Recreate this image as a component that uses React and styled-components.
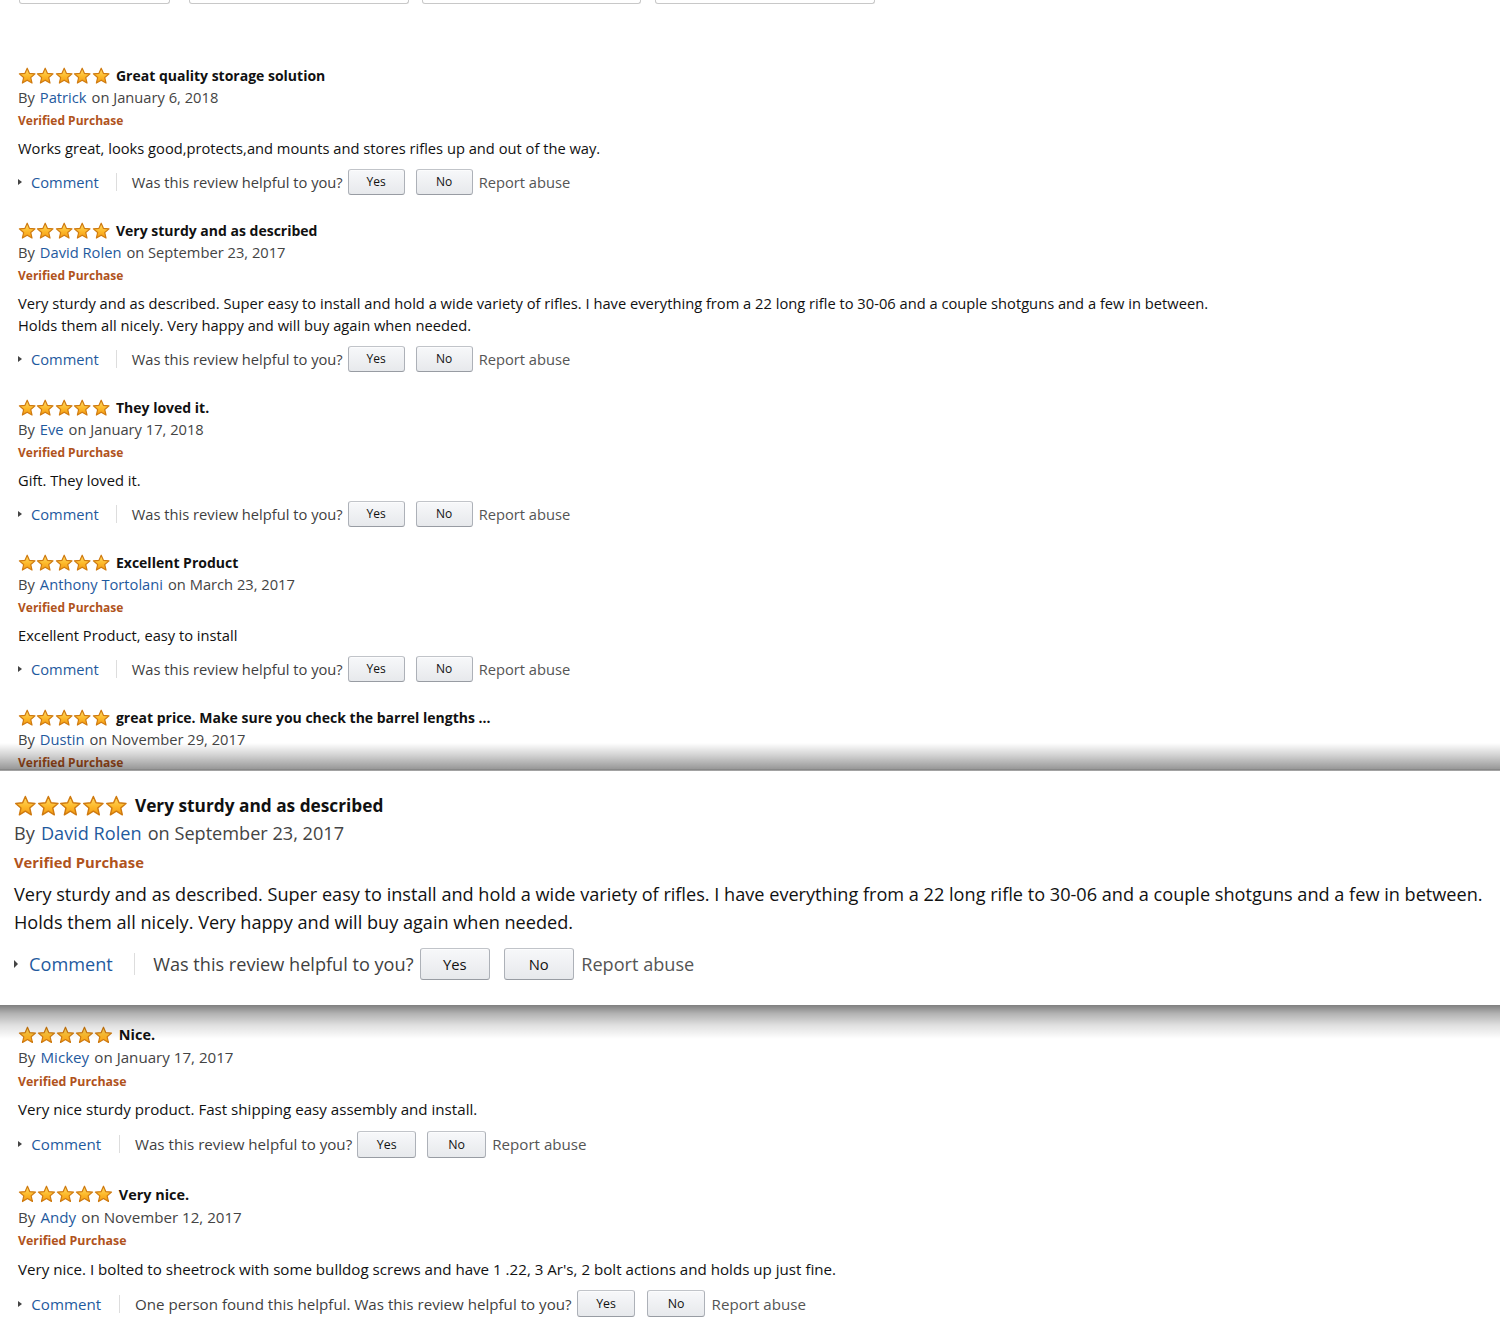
import React from "react";
import styled, { createGlobalStyle } from "styled-components";

// sizes scale with the review block ($s), the spotlight panel is drawn larger
const u = n => p => `${+(n * p.$s).toFixed(2)}px`;

const GlobalStyle = createGlobalStyle`
  body {
    margin: 0;
    background: #fff;
    font-family: "Open Sans", "Liberation Sans", sans-serif;
    color: #111;
  }
`;

const Page = styled.div`
  width: 1500px;
  height: 1320px;
  overflow: hidden;
`;

const TopStrip = styled.div`
  display: flex;
  height: 6px;
`;

const TopTab = styled.div`
  width: ${p => p.$w}px;
  margin-left: ${p => p.$ml}px;
  height: 3px;
  border: 1px solid #c8c8c8;
  border-top: none;
  border-radius: 0 0 3px 3px;
`;

const ReviewList = styled.div`
  padding: ${p => p.$pt}px 0 0 18px;
`;

const ReviewBlock = styled.div`
  display: flex;
  flex-direction: column;
  padding-bottom: ${p => u(p.$pb)(p)};
`;

const TitleRow = styled.div`
  display: flex;
  align-items: center;
  height: ${u(22)};
`;

const Stars = styled.div`
  display: flex;
  margin-right: ${u(6)};
`;

const Title = styled.span`
  font-weight: 700;
  font-size: ${u(14)};
  color: #111;
`;

const Line = styled.div`
  font-size: ${u(14.7)};
  line-height: ${u(23)};
  color: #444;
  white-space: nowrap;
`;

const Author = styled.a`
  color: #1f5a9e;
  text-decoration: none;
  margin: 0 ${u(5)} 0 ${u(5)};
`;

const Verified = styled.div`
  font-size: ${u(12)};
  font-weight: 700;
  line-height: ${u(23)};
  color: #b0531c;
`;

const Body = styled.div`
  margin-top: ${u(4.5)};
  font-size: ${u(14.7)};
  line-height: ${u(22)};
  color: #111;
  white-space: nowrap;
`;

const Actions = styled.div`
  display: flex;
  align-items: center;
  margin-top: ${u(10)};
  height: ${u(26)};
  font-size: ${u(14.7)};
  white-space: nowrap;
`;

const CommentLink = styled.a`
  display: flex;
  align-items: center;
  color: #1f5a9e;
  text-decoration: none;
`;

const Caret = styled.span`
  width: 0;
  height: 0;
  border-top: ${u(3.5)} solid transparent;
  border-bottom: ${u(3.5)} solid transparent;
  border-left: ${u(4)} solid #444;
  margin-right: ${u(9)};
`;

const Divider = styled.span`
  width: 1px;
  height: ${u(18)};
  background: #ddd;
  margin: 0 ${u(15)} 0 ${u(17)};
`;

const Question = styled.span`
  color: #3f3f3f;
`;

const VoteButton = styled.button`
  width: ${u(57)};
  height: ${u(26)};
  margin-left: ${p => u(p.$ml)(p)};
  padding: 0;
  border: 1px solid #adb1b8;
  border-top-color: #c1c4c9;
  border-bottom-color: #989ca3;
  border-radius: 3px;
  background: linear-gradient(#f7f8fa, #e7e9ec);
  box-shadow: inset 0 1px 0 rgba(255, 255, 255, 0.6);
  font-family: inherit;
  font-size: ${u(12)};
  color: #111;
`;

const ReportLink = styled.a`
  margin-left: ${u(6)};
  color: #555;
  text-decoration: none;
`;

const Spotlight = styled.section`
  position: relative;
  z-index: 1;
  margin-top: -3px;
  background: #fff;
  padding: 21px 0 25px 14px;

  &::before,
  &::after {
    content: "";
    position: absolute;
    left: 0;
    right: 0;
  }
  &::before {
    top: -28px;
    height: 28px;
    background: linear-gradient(
      rgba(0, 0, 0, 0) 0%,
      rgba(0, 0, 0, 0.18) 45%,
      rgba(0, 0, 0, 0.4) 92%,
      rgba(0, 0, 0, 0.5) 96%,
      rgba(0, 0, 0, 0.25) 100%
    );
  }
  &::after {
    bottom: -34px;
    height: 34px;
    background: linear-gradient(
      rgba(0, 0, 0, 0.5) 0%,
      rgba(0, 0, 0, 0.3) 25%,
      rgba(0, 0, 0, 0.12) 60%,
      rgba(0, 0, 0, 0) 100%
    );
  }
`;

const Star = ({ s }) => (
  <svg width={18.4 * s} height={17 * s} viewBox="0 0 20 19">
    <defs>
      <linearGradient id="starFill" x1="0" y1="0" x2="0" y2="1">
        <stop offset="0" stopColor="#ffdf6a" />
        <stop offset="0.55" stopColor="#fdb92a" />
        <stop offset="1" stopColor="#f39a13" />
      </linearGradient>
    </defs>
    <polygon
      points="10,1.3 12.47,7.1 18.75,7.66 13.99,11.8 15.41,17.94 10,14.7 4.59,17.94 6.01,11.8 1.25,7.66 7.53,7.1"
      fill="url(#starFill)"
      stroke="#cf7a10"
      strokeWidth="1.3"
      strokeLinejoin="round"
    />
  </svg>
);

const Review = ({ r, s, cut, pb = 24.5 }) => (
  <ReviewBlock $s={s} $pb={cut ? 0 : pb}>
    <TitleRow $s={s}>
      <Stars $s={s}>
        {[0, 1, 2, 3, 4].map(i => (
          <Star key={i} s={s} />
        ))}
      </Stars>
      <Title $s={s}>{r.title}</Title>
    </TitleRow>
    <Line $s={s}>
      By<Author $s={s}>{r.author}</Author>on {r.date}
    </Line>
    <Verified $s={s}>Verified Purchase</Verified>
    {!cut && (
      <>
        <Body $s={s}>
          {r.body.map((l, i) => (
            <div key={i}>{l}</div>
          ))}
        </Body>
        <Actions $s={s}>
          <CommentLink>
            <Caret $s={s} />
            Comment
          </CommentLink>
          <Divider $s={s} />
          <Question>
            {r.helpful ? r.helpful + " " : ""}Was this review helpful to you?
          </Question>
          <VoteButton $s={s} $ml={5}>Yes</VoteButton>
          <VoteButton $s={s} $ml={11}>No</VoteButton>
          <ReportLink $s={s}>Report abuse</ReportLink>
        </Actions>
      </>
    )}
  </ReviewBlock>
);

const sturdy = {
  title: "Very sturdy and as described",
  author: "David Rolen",
  date: "September 23, 2017",
  body: [
    "Very sturdy and as described. Super easy to install and hold a wide variety of rifles. I have everything from a 22 long rifle to 30-06 and a couple shotguns and a few in between.",
    "Holds them all nicely. Very happy and will buy again when needed."
  ]
};

const upper = [
  {
    title: "Great quality storage solution",
    author: "Patrick",
    date: "January 6, 2018",
    body: ["Works great, looks good,protects,and mounts and stores rifles up and out of the way."]
  },
  sturdy,
  {
    title: "They loved it.",
    author: "Eve",
    date: "January 17, 2018",
    body: ["Gift. They loved it."]
  },
  {
    title: "Excellent Product",
    author: "Anthony Tortolani",
    date: "March 23, 2017",
    body: ["Excellent Product, easy to install"]
  }
];

const dustin = {
  title: "great price. Make sure you check the barrel lengths ...",
  author: "Dustin",
  date: "November 29, 2017",
  body: []
};

const lower = [
  {
    title: "Nice.",
    author: "Mickey",
    date: "January 17, 2017",
    body: ["Very nice sturdy product. Fast shipping easy assembly and install."]
  },
  {
    title: "Very nice.",
    author: "Andy",
    date: "November 12, 2017",
    body: [
      "Very nice. I bolted to sheetrock with some bulldog screws and have 1 .22, 3 Ar's, 2 bolt actions and holds up just fine."
    ],
    helpful: "One person found this helpful."
  }
];

const tabs = [
  { w: 149, ml: 19 },
  { w: 218, ml: 19 },
  { w: 217, ml: 13 },
  { w: 218, ml: 14 }
];

export default function App() {
  return (
    <Page>
      <GlobalStyle />
      <TopStrip>
        {tabs.map((t, i) => (
          <TopTab key={i} $w={t.w} $ml={t.ml} />
        ))}
      </TopStrip>
      <ReviewList $pt={58}>
        {upper.map((r, i) => (
          <Review key={i} r={r} s={1} />
        ))}
        <Review r={dustin} s={1} cut />
      </ReviewList>
      <Spotlight>
        <Review r={sturdy} s={1.234} pb={0} />
      </Spotlight>
      <ReviewList $pt={18}>
        {lower.map((r, i) => (
          <Review key={i} r={r} s={1.03} pb={24.6} />
        ))}
      </ReviewList>
    </Page>
  );
}
